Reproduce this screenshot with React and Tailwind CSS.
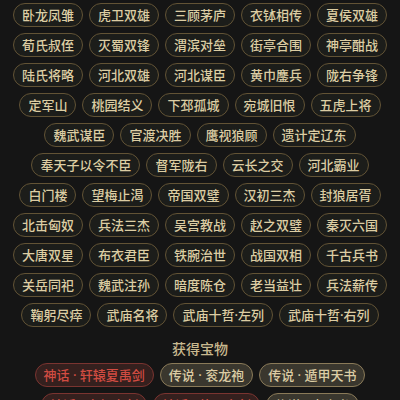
const rows = [
  ['卧龙凤雏', '虎卫双雄', '三顾茅庐', '衣钵相传', '夏侯双雄'],
  ['荀氏叔侄', '灭蜀双锋', '渭滨对垒', '街亭合围', '神亭酣战'],
  ['陆氏将略', '河北双雄', '河北谋臣', '黄巾鏖兵', '陇右争锋'],
  ['定军山', '桃园结义', '下邳孤城', '宛城旧恨', '五虎上将'],
  ['魏武谋臣', '官渡决胜', '鹰视狼顾', '遗计定辽东'],
  ['奉天子以令不臣', '督军陇右', '云长之交', '河北霸业'],
  ['白门楼', '望梅止渴', '帝国双璧', '汉初三杰', '封狼居胥'],
  ['北击匈奴', '兵法三杰', '吴宫教战', '赵之双璧', '秦灭六国'],
  ['大唐双星', '布衣君臣', '铁腕治世', '战国双相', '千古兵书'],
  ['关岳同祀', '魏武注孙', '暗度陈仓', '老当益壮', '兵法薪传'],
  ['鞠躬尽瘁', '武庙名将', '武庙十哲·左列', '武庙十哲·右列'],
]

const treasures = [
  [
    { name: '神话 · 轩辕夏禹剑', tier: 'myth' },
    { name: '传说 · 衮龙袍', tier: 'legend' },
    { name: '传说 · 遁甲天书', tier: 'legend' },
  ],
  [
    { name: '神话 · 青釭宝剑', tier: 'myth' },
    { name: '神话 · 倚天宝剑', tier: 'myth' },
    { name: '传说 · 青囊书', tier: 'legend' },
  ],
]

const Tag = ({ children }) => (
  <div className="h-[24px] px-[8px] flex items-center rounded-full border border-[#625335] bg-[#1c1d1a] text-[#dccda3] text-[13px] font-medium leading-none whitespace-nowrap">
    {children}
  </div>
)

const Treasure = ({ name, tier }) => (
  <div
    className={`h-[24px] px-[8px] flex items-center rounded-full border text-[13px] font-medium leading-none whitespace-nowrap ${
      tier === 'myth'
        ? 'border-[#7a3430] bg-[#35201e] text-[#d24c42]'
        : 'border-[#8a7a58] bg-[#3a372e] text-[#dccca4]'
    }`}
  >
    {name}
  </div>
)

export default function App() {
  return (
    <div
      className="w-[400px] h-[400px] overflow-hidden bg-[#151515] pt-[3px]"
      style={{ fontFamily: '"Noto Sans", "Noto Sans CJK SC", sans-serif' }}
    >
      {/* combo tags */}
      <div className="flex flex-col gap-[6px]">
        {rows.map((row, i) => (
          <div key={i} className="flex justify-center gap-[6px]">
            {row.map(t => (
              <Tag key={t}>{t}</Tag>
            ))}
          </div>
        ))}
      </div>

      {/* treasures */}
      <div className="mt-[12px] text-center text-[14px] leading-[20px] font-medium text-[#c9b98f]">
        获得宝物
      </div>
      <div className="mt-[4px] flex flex-col gap-[6px]">
        {treasures.map((row, i) => (
          <div key={i} className="flex justify-center gap-[6px]">
            {row.map(t => (
              <Treasure key={t.name} {...t} />
            ))}
          </div>
        ))}
      </div>
    </div>
  )
}
